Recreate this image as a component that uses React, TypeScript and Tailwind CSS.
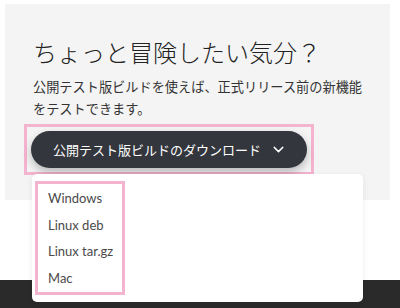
import { ChevronDown } from "lucide-react";

const platforms = ["Windows", "Linux deb", "Linux tar.gz", "Mac"];

export default function App() {
  return (
    <div className="relative h-[308px] w-[400px] overflow-hidden bg-white font-['Noto_Sans_CJK_JP',sans-serif]">
      <div className="pl-[5px] pr-[10px] pt-[4px]">
        <section className="h-[196px] bg-[#f4f4f4] pl-[28px] pt-[30px]">
          <h1 className="text-[24px] font-light leading-[36px] text-[#222]">
            ちょっと冒険したい気分？
          </h1>
          <p className="mt-[6px] text-[13.2px] leading-[22px] text-[#333]">
            公開テスト版ビルドを使えば、正式リリース前の新機能
            <br />
            をテストできます。
          </p>
          <div className="ml-[-9px] mt-[4px] inline-block border-[3px] border-[#f4b3ce] p-[4px]">
            <button className="flex h-[37px] w-[276px] items-center justify-between rounded-full bg-[#33363c] pl-[22px] pr-[20px] text-[13px] text-white shadow-[0_4px_8px_rgba(0,0,0,0.25)]">
              <span>公開テスト版ビルドのダウンロード</span>
              <ChevronDown size={17} strokeWidth={2} />
            </button>
          </div>
        </section>
      </div>
      <div className="mt-[80px] h-[28px] bg-[#2a2a2a]" />

      {/* dropdown menu */}
      <div className="absolute left-[32px] top-[174px] h-[128px] w-[331px] rounded-[5px] bg-white pl-[3px] pt-[7px] shadow-[0_2px_6px_rgba(0,0,0,0.08)]">
        <ul className="w-[90px] border-[3px] border-[#f4b3ce] pb-[1px] pl-[10px] pt-[1px] font-['Lato',sans-serif] text-[13px] text-[#4a4a4a]">
          {platforms.map((p) => (
            <li key={p} className="leading-[26.5px]">
              {p}
            </li>
          ))}
        </ul>
      </div>
    </div>
  );
}
